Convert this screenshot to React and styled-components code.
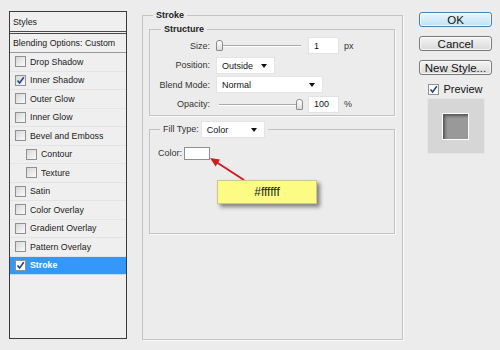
import React from 'react'
import styled, { createGlobalStyle } from 'styled-components'

const GlobalStyle = createGlobalStyle`
    html, body {
        margin: 0;
        padding: 0;
        background: #ececec;
    }
    body {
        font-family: "Liberation Sans", Arial, sans-serif;
        font-size: 9px;
        color: #1a1a1a;
    }
`

const Dialog = styled.div`
    display: flex;
    align-items: flex-start;
    width: 500px;
    height: 350px;
    padding-left: 9px;
    box-sizing: border-box;
    background: #ececec;
    overflow: hidden;
`

/* ---------- left styles list ---------- */

const StylesPanel = styled.div`
    margin-top: 11px;
    width: 118px;
    height: 328px;
    box-sizing: border-box;
    border: 1px solid #3a3a3a;
    background: #efefef;
    font-size: 8.8px;
`

const PanelHeader = styled.div`
    height: 19px;
    display: flex;
    align-items: center;
    padding-left: 3px;
    border-bottom: 3px double #4a4a4a;
`

const BlendRow = styled.div`
    height: 18px;
    display: flex;
    align-items: center;
    padding-left: 3px;
    border-bottom: 1px solid #9a9a9a;
`

const StyleRow = styled.div`
    height: 18.5px;
    box-sizing: border-box;
    display: flex;
    align-items: center;
    gap: 2px;
    padding-left: ${p => (p.$indent ? 16 : 5)}px;
    border-bottom: 1px solid ${p => (p.$active ? '#bcdcfb' : '#e4e4e4')};
    background: ${p => (p.$active ? '#3597f7' : 'transparent')};
    color: ${p => (p.$active ? '#fff' : '#1a1a1a')};
    font-weight: ${p => (p.$active ? 'bold' : 'normal')};
`

const Box = styled.span`
    width: 9px;
    height: 9px;
    flex: none;
    display: inline-flex;
    align-items: center;
    justify-content: center;
    border: 1px solid #8f9090;
    background: ${p =>
        p.$light ? '#fff' : 'linear-gradient(135deg, #d6d6d6, #fbfbfb)'};
    margin-right: 2px;
`

const Check = ({ checked, light }) => (
    <Box $light={light}>
        {checked && (
            <svg width="9" height="9" viewBox="0 0 9 9">
                <path
                    d="M1.5 4.5 L3.6 7 L7.8 1.3"
                    fill="none"
                    stroke="#1f3f8f"
                    strokeWidth="1.5"
                />
            </svg>
        )}
    </Box>
)

const styleItems = [
    { name: 'Drop Shadow' },
    { name: 'Inner Shadow', checked: true },
    { name: 'Outer Glow' },
    { name: 'Inner Glow' },
    { name: 'Bevel and Emboss' },
    { name: 'Contour', indent: true },
    { name: 'Texture', indent: true },
    { name: 'Satin' },
    { name: 'Color Overlay' },
    { name: 'Gradient Overlay' },
    { name: 'Pattern Overlay' },
    { name: 'Stroke', checked: true, active: true },
]

/* ---------- middle stroke settings ---------- */

const Group = styled.fieldset`
    margin: 0;
    box-sizing: border-box;
    border: 1px solid #c3c3c3;
    box-shadow: 1px 1px 0 #fafafa;
    min-width: 0;
`

const OuterGroup = styled(Group)`
    margin: 9px 0 0 15px;
    width: 261px;
    height: 331px;
    padding: 2px 7px 0 6px;
`

const Legend = styled.legend`
    padding: 0 3px;
    margin-left: ${p => p.$offset}px;
    font-weight: bold;
    line-height: 12px;
    color: #222;
`

const StructureGroup = styled(Group)`
    padding: 2px 4px 2px 4px;
`

const Rows = styled.div`
    display: grid;
    grid-template-columns: 56px 1fr;
    column-gap: 6px;
    row-gap: 2.5px;
    align-items: center;
`

const Label = styled.span`
    text-align: right;
    color: #333;
    white-space: nowrap;
`

const Control = styled.div`
    display: flex;
    align-items: center;
    height: 17px;
`

const SliderWrap = styled.div`
    position: relative;
    width: 87px;
    height: 17px;
    margin-right: 5px;
`

const Track = styled.div`
    position: absolute;
    left: 3px;
    right: 2px;
    top: 8px;
    height: 1px;
    background: #a9a9a9;
    box-shadow: 0 1px 0 #fff;
`

const Thumb = styled.div`
    position: absolute;
    top: 3px;
    width: 5px;
    height: 9px;
    border: 1px solid #8c8c8c;
    border-radius: 3px 3px 1px 1px;
    background: linear-gradient(#ffffff, #dcdcdc);
`

const Slider = ({ value }) => (
    <SliderWrap>
        <Track />
        <Thumb style={{ left: `${(value / 100) * 80}px` }} />
    </SliderWrap>
)

const NumberBox = styled.div`
    width: 31px;
    height: 17px;
    box-sizing: border-box;
    background: #fff;
    border: 1px solid #e2e2e2;
    padding-left: 5px;
    display: flex;
    align-items: center;
    color: #111;
`

const Unit = styled.span`
    margin-left: 5px;
    color: #333;
`

const SelectBox = styled.div`
    width: ${p => p.$w}px;
    height: 17px;
    box-sizing: border-box;
    background: #fff;
    border: 1px solid #e4e4e4;
    display: flex;
    align-items: center;
    justify-content: space-between;
    padding: 1px 7px 0 5px;
    color: #111;
`

const Arrow = styled.span`
    width: 0;
    height: 0;
    border-left: 3.5px solid transparent;
    border-right: 3.5px solid transparent;
    border-top: 4px solid #111;
`

const Select = ({ w, children }) => (
    <SelectBox $w={w}>
        <span>{children}</span>
        <Arrow />
    </SelectBox>
)

const FillGroup = styled(Group)`
    margin-top: 5px;
    height: 113px;
    padding: 9px 8px 0 8px;
`

const FillLegend = styled.legend`
    display: flex;
    align-items: center;
    gap: 2px;
    padding: 0 3px;
    margin-left: 2px;
    color: #333;
`

const FillBody = styled.div`
    position: relative;
    display: flex;
    align-items: center;
    gap: 2px;
    color: #333;
`

const Swatch = styled.div`
    width: 26px;
    height: 13px;
    box-sizing: border-box;
    background: #fff;
    border: 1px solid #8e8e8e;
`

const Note = styled.div`
    position: absolute;
    left: 59px;
    top: 33px;
    width: 100px;
    height: 24px;
    box-sizing: border-box;
    background: #fcfc84;
    border: 1px solid #c9c98a;
    box-shadow: 3px 3px 4px rgba(0, 0, 0, 0.45);
    display: flex;
    align-items: center;
    justify-content: center;
    font-size: 12px;
    color: #222;
`

const Pointer = styled.svg`
    position: absolute;
    left: 48px;
    top: 5px;
`

/* ---------- right buttons ---------- */

const Side = styled.div`
    margin: 12px 0 0 16px;
    width: 73px;
    display: flex;
    flex-direction: column;
    align-items: center;
`

const Button = styled.div`
    width: 73px;
    height: 15px;
    box-sizing: border-box;
    margin-bottom: 9px;
    border: 1px solid ${p => (p.$primary ? '#3d86b8' : '#7a7a7a')};
    border-radius: 3px;
    background: ${p =>
        p.$primary
            ? 'linear-gradient(#eaf6fd, #bfe2f7)'
            : 'linear-gradient(#f4f4f4, #dadada)'};
    box-shadow: inset 0 0 0 1px rgba(255, 255, 255, 0.7);
    display: flex;
    align-items: center;
    justify-content: center;
    font-size: 11.5px;
    color: #111;
`

const PreviewToggle = styled.div`
    display: flex;
    align-items: center;
    gap: 2px;
    margin-top: -1px;
    font-size: 11px;
    color: #111;
`

const PreviewBox = styled.div`
    margin-top: 3px;
    width: 58px;
    height: 56px;
    box-sizing: border-box;
    background: #d6d6d6;
    border: 1px solid #e6e6e6;
    display: flex;
    align-items: center;
    justify-content: center;
`

const PreviewSquare = styled.div`
    width: 27px;
    height: 27px;
    box-sizing: border-box;
    border: 1px solid #fff;
    background: #999;
    box-shadow: inset 2px 2px 3px rgba(0, 0, 0, 0.45);
`

export default function App() {
    return (
        <Dialog>
            <GlobalStyle />

            <StylesPanel>
                <PanelHeader>Styles</PanelHeader>
                <BlendRow>Blending Options: Custom</BlendRow>
                {styleItems.map(item => (
                    <StyleRow
                        key={item.name}
                        $indent={item.indent}
                        $active={item.active}
                    >
                        <Check checked={item.checked} light={item.active} />
                        {item.name}
                    </StyleRow>
                ))}
            </StylesPanel>

            <OuterGroup>
                <Legend $offset={4}>Stroke</Legend>

                <StructureGroup>
                    <Legend $offset={7}>Structure</Legend>
                    <Rows>
                        <Label>Size:</Label>
                        <Control>
                            <Slider value={0} />
                            <NumberBox>1</NumberBox>
                            <Unit>px</Unit>
                        </Control>

                        <Label>Position:</Label>
                        <Control>
                            <Select w={59}>Outside</Select>
                        </Control>

                        <Label>Blend Mode:</Label>
                        <Control>
                            <Select w={107}>Normal</Select>
                        </Control>

                        <Label>Opacity:</Label>
                        <Control>
                            <Slider value={100} />
                            <NumberBox>100</NumberBox>
                            <Unit>%</Unit>
                        </Control>
                    </Rows>
                </StructureGroup>

                <FillGroup>
                    <FillLegend>
                        Fill Type:
                        <Select w={64}>Color</Select>
                    </FillLegend>
                    <FillBody>
                        Color:
                        <Swatch />
                        <Pointer width="45" height="32" viewBox="0 0 45 32">
                            <line
                                x1="38"
                                y1="28"
                                x2="11"
                                y2="10.5"
                                stroke="#d01c1c"
                                strokeWidth="2"
                            />
                            <polygon
                                points="4,6 14,7.6 9.6,14.4"
                                fill="#d01c1c"
                            />
                        </Pointer>
                        <Note>#ffffff</Note>
                    </FillBody>
                </FillGroup>
            </OuterGroup>

            <Side>
                <Button $primary>OK</Button>
                <Button>Cancel</Button>
                <Button>New Style...</Button>
                <PreviewToggle>
                    <Check checked light />
                    Preview
                </PreviewToggle>
                <PreviewBox>
                    <PreviewSquare />
                </PreviewBox>
            </Side>
        </Dialog>
    )
}
